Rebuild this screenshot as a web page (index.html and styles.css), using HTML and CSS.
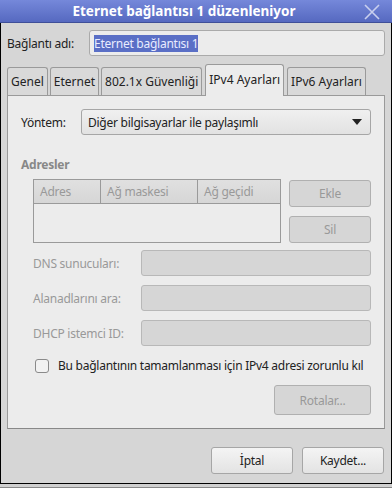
FILE: index.html
```html
<!DOCTYPE html>
<html lang="tr">
<head>
  <meta charset="UTF-8">
  <title>Eternet bağlantısı 1 düzenleniyor</title>
  <link rel="stylesheet" href="styles.css">
</head>
<body>
  <div class="window">
    <header class="titlebar">
      <span class="title">Eternet bağlantısı 1 düzenleniyor</span>
      <svg class="close" width="18" height="18" viewBox="0 0 18 18">
        <path d="M2 2 L16 16 M16 2 L2 16" stroke="#c9d0ee" stroke-width="1.6" fill="none"/>
      </svg>
    </header>

    <div class="content">
      <div class="name-row">
        <label>Bağlantı adı:</label>
        <div class="name-input"><span class="selected">Eternet bağlantısı 1</span></div>
      </div>

      <div class="tabs">
        <div class="tab">Genel</div>
        <div class="tab">Eternet</div>
        <div class="tab">802.1x Güvenliği</div>
        <div class="tab active">IPv4 Ayarları</div>
        <div class="tab">IPv6 Ayarları</div>
      </div>

      <div class="panel">
        <div class="method-row">
          <label>Yöntem:</label>
          <div class="combo">
            <span>Diğer bilgisayarlar ile paylaşımlı</span>
            <span class="arrow"></span>
          </div>
        </div>

        <div class="section-title">Adresler</div>
        <div class="addresses">
          <div class="table">
            <div class="thead">
              <div class="th col-addr">Adres</div>
              <div class="th col-mask">Ağ maskesi</div>
              <div class="th col-gw">Ağ geçidi</div>
            </div>
          </div>
          <div class="side-buttons">
            <div class="btn disabled">Ekle</div>
            <div class="btn disabled">Sil</div>
          </div>
        </div>

        <div class="fields">
          <div class="field-row">
            <label>DNS sunucuları:</label>
            <div class="field"></div>
          </div>
          <div class="field-row">
            <label>Alanadlarını ara:</label>
            <div class="field"></div>
          </div>
          <div class="field-row">
            <label>DHCP istemci ID:</label>
            <div class="field"></div>
          </div>
        </div>

        <div class="check-row">
          <span class="checkbox"></span>
          <span>Bu bağlantının tamamlanması için IPv4 adresi zorunlu kıl</span>
        </div>

        <div class="routes-row">
          <div class="btn disabled routes">Rotalar...</div>
        </div>
      </div>

      <div class="actions">
        <div class="btn">İptal</div>
        <div class="btn">Kaydet...</div>
      </div>
    </div>
  </div>
  <div class="under"></div>
</body>
</html>
```

FILE: styles.css
```css
* {
  margin: 0;
  padding: 0;
  box-sizing: border-box;
}
body {
  width: 392px;
  height: 488px;
  overflow: hidden;
  font-family: 'Noto Sans', sans-serif;
  font-size: 12px;
  letter-spacing: -0.25px;
  color: #222;
  background: #d6d6d6;
  white-space: nowrap;
}
.window {
  height: 484px;
  display: flex;
  flex-direction: column;
  border: 1px solid #000;
  border-top: none;
  background: #d6d6d6;
}
.under {
  height: 4px;
  background: #d0d0d0;
  border-bottom: 1px solid #888;
}
.titlebar {
  height: 23px;
  display: flex;
  align-items: center;
  justify-content: center;
  position: relative;
  background: linear-gradient(#7588da, #5669c0);
  border-bottom: 1px solid #3f4f98;
  margin: 0 -1px;
}
.title {
  color: #fff;
  font-weight: 700;
  font-size: 13.5px;
  letter-spacing: 0;
  margin-right: 24px;
}
.close {
  position: absolute;
  right: 11px;
  top: 3px;
}
.content {
  flex: 1;
  padding: 7px 6px 0 6px;
  display: flex;
  flex-direction: column;
}
.name-row {
  display: flex;
  align-items: center;
  height: 26px;
}
.name-row label {
  width: 82px;
}
.name-input {
  flex: 1;
  height: 26px;
  background: #ececec;
  border: 1px solid #aaa;
  border-radius: 3px;
  padding: 0 4px;
  display: flex;
  align-items: center;
}
.selected {
  background: #5a6fc6;
  color: #e8ecff;
  line-height: 17px;
}
.tabs {
  display: flex;
  align-items: flex-end;
  margin-top: 8px;
  height: 31px;
  gap: 2px;
  position: relative;
  z-index: 1;
  letter-spacing: 0;
}
.tab {
  height: 28px;
  padding: 0 3px;
  display: flex;
  align-items: center;
  background: #d9d9d9;
  border: 1px solid #9a9a9a;
  border-bottom: none;
  border-radius: 3px 3px 0 0;
}
.tab.active {
  height: 32px;
  margin-bottom: -1px;
  padding: 0 3px 2px;
  background: #ececec;
  margin-left: 1px;
  margin-right: 1px;
}
.panel {
  height: 334px;
  background: #ececec;
  border: 1px solid #9a9a9a;
  border-bottom-color: #888;
  padding: 13px 13px 0 13px;
  display: flex;
  flex-direction: column;
}
.method-row {
  display: flex;
  align-items: center;
}
.method-row label {
  width: 60px;
}
.combo {
  flex: 1;
  height: 26px;
  display: flex;
  align-items: center;
  justify-content: space-between;
  padding: 0 8px 0 6px;
  background: linear-gradient(#f0f0f0, #e2e2e2);
  border: 1px solid #a6a6a6;
  border-radius: 3px;
}
.arrow {
  width: 0;
  height: 0;
  border-left: 5px solid transparent;
  border-right: 5px solid transparent;
  border-top: 6px solid #222;
}
.section-title {
  margin-top: 21px;
  font-weight: 700;
  color: #888;
}
.addresses {
  display: flex;
  margin-top: 6px;
  padding-left: 12px;
  gap: 8px;
}
.table {
  width: 249px;
  height: 64px;
  border: 1px solid #9a9a9a;
  background: #ececec;
}
.thead {
  display: flex;
  height: 24px;
  background: linear-gradient(#e0e0e0, #d6d6d6);
  border-bottom: 1px solid #9a9a9a;
}
.th {
  padding: 0 6px;
  display: flex;
  align-items: center;
  color: #999;
  border-right: 1px solid #9a9a9a;
}
.col-addr { width: 67px; }
.col-mask { width: 97px; }
.col-gw { flex: 1; border-right: none; }
.side-buttons {
  display: flex;
  flex-direction: column;
  gap: 9px;
  padding-top: 1px;
}
.btn {
  width: 82px;
  height: 27px;
  display: flex;
  align-items: center;
  justify-content: center;
  background: linear-gradient(#f4f4f4, #e3e3e3);
  border: 1px solid #a6a6a6;
  border-radius: 3px;
  color: #222;
}
.btn.disabled {
  background: #d6d6d6;
  border-color: #b0b0b0;
  color: #999;
}
.fields {
  display: flex;
  flex-direction: column;
  gap: 9px;
  margin-top: 7px;
  padding-left: 12px;
}
.field-row {
  display: flex;
  align-items: center;
}
.field-row label {
  width: 108px;
  color: #999;
}
.field {
  flex: 1;
  height: 26px;
  background: #d6d6d6;
  border: 1px solid #b8b8b8;
  border-radius: 3px;
}
.check-row {
  display: flex;
  align-items: center;
  margin-top: 11px;
  padding-left: 14px;
  gap: 9px;
}
.checkbox {
  flex-shrink: 0;
  width: 14px;
  height: 14px;
  border: 1px solid #8a8a8a;
  border-radius: 3px;
  background: #f2f2f2;
}
.routes-row {
  display: flex;
  justify-content: flex-end;
  margin-top: 11px;
}
.btn.routes {
  width: 97px;
  height: 30px;
}
.actions {
  display: flex;
  justify-content: flex-end;
  gap: 9px;
  margin-top: 18px;
  margin-right: 1px;
}
.actions .btn {
  height: 27px;
}
```
